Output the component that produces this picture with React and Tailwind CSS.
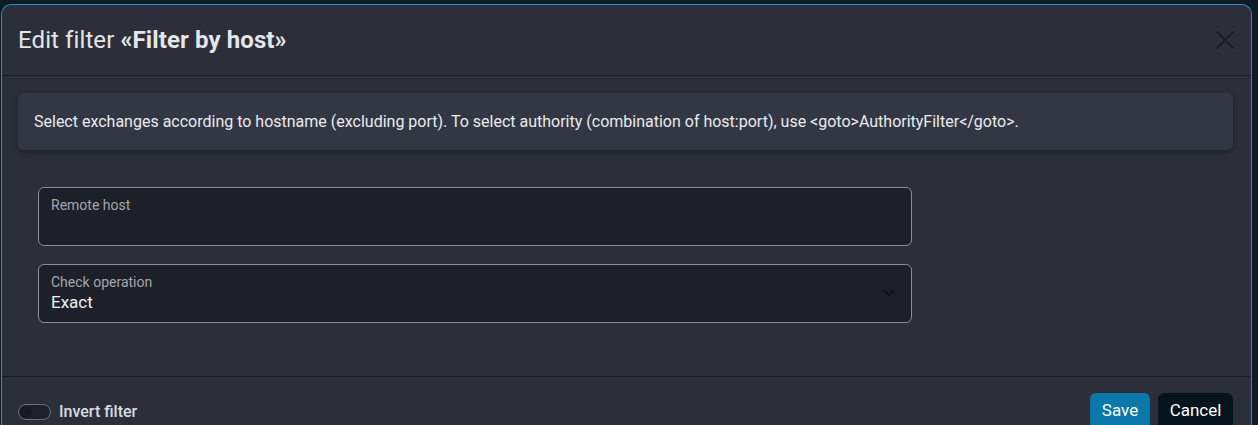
import React from 'react'

const font = { fontFamily: 'Roboto, "Noto Sans", Arial, sans-serif' }

function Field({ label, value, select }) {
  return (
    <div className="relative h-[59px] w-[874px] rounded-md border border-[#8b8e95] bg-[#1d2028] px-[12px] pt-[9px]">
      <div className="text-[14px] leading-[17px] text-[#a3a6ad]">{label}</div>
      {value && <div className="mt-[1px] text-[17px] leading-[20px] text-[#eceef2]">{value}</div>}
      {select && (
        <svg className="absolute right-[14px] top-[20px]" width="16" height="16" viewBox="0 0 24 24" fill="none" stroke="#0f1118" strokeWidth="2.6" strokeLinecap="round" strokeLinejoin="round">
          <path d="M5 8.5l7 7 7-7" />
        </svg>
      )}
    </div>
  )
}

export default function App() {
  return (
    <div className="h-[425px] w-[1258px] overflow-hidden bg-[#0f1c26] pl-[1px] pt-[4px]" style={font}>
      <div className="h-[440px] w-[1251px] rounded-t-[10px] border border-b-0 border-[#2b8bc3] bg-[#2c2f3a]">
        {/* Header */}
        <div className="flex h-[71px] items-center justify-between border-b border-[#1b1d23] pl-[16px] pr-[16px]">
          <h1 className="text-[24px] tracking-[0.1px] text-[#e4e6ea]">
            Edit filter <span className="font-bold">«Filter by host»</span>
          </h1>
          <svg width="20" height="20" viewBox="0 0 20 20" fill="none" stroke="#15171c" strokeWidth="1.6" strokeLinecap="round">
            <path d="M2 2l16 16M18 2L2 18" />
          </svg>
        </div>

        {/* Body */}
        <div className="h-[301px] border-b border-[#1b1d23] pt-[17px]">
          <div className="ml-[16px] mr-[18px] flex h-[57px] items-center rounded-md bg-[#333743] pl-[16px] shadow-[0_2px_6px_rgba(0,0,0,0.35)]">
            <p className="text-[16px] text-[#e9ebef]">
              Select exchanges according to hostname (excluding port). To select authority (combination of host:port), use &lt;goto&gt;AuthorityFilter&lt;/goto&gt;.
            </p>
          </div>
          <div className="ml-[36px] mt-[37px] flex flex-col gap-[18px]">
            <Field label="Remote host" />
            <Field label="Check operation" value="Exact" select />
          </div>
        </div>

        {/* Footer */}
        <div className="flex items-start justify-between pl-[16px] pr-[18px] pt-[16px]">
          <label className="mt-[7px] flex items-center gap-[8px]">
            <span className="relative flex h-[16px] w-[33px] items-center rounded-full border border-[#6c6f76] bg-[#1f222a] px-[1px]">
              <span className="h-[12px] w-[12px] rounded-full bg-[#181a20]" />
            </span>
            <span className="text-[16px] font-medium text-[#d9dce1]">Invert filter</span>
          </label>
          <div className="flex gap-[8px]">
            <button className="h-[36px] w-[60px] rounded-md bg-[#0a78a9] text-[17px] text-white">Save</button>
            <button className="h-[36px] w-[75px] rounded-md bg-[#06141d] text-[17px] text-white">Cancel</button>
          </div>
        </div>
      </div>
    </div>
  )
}
